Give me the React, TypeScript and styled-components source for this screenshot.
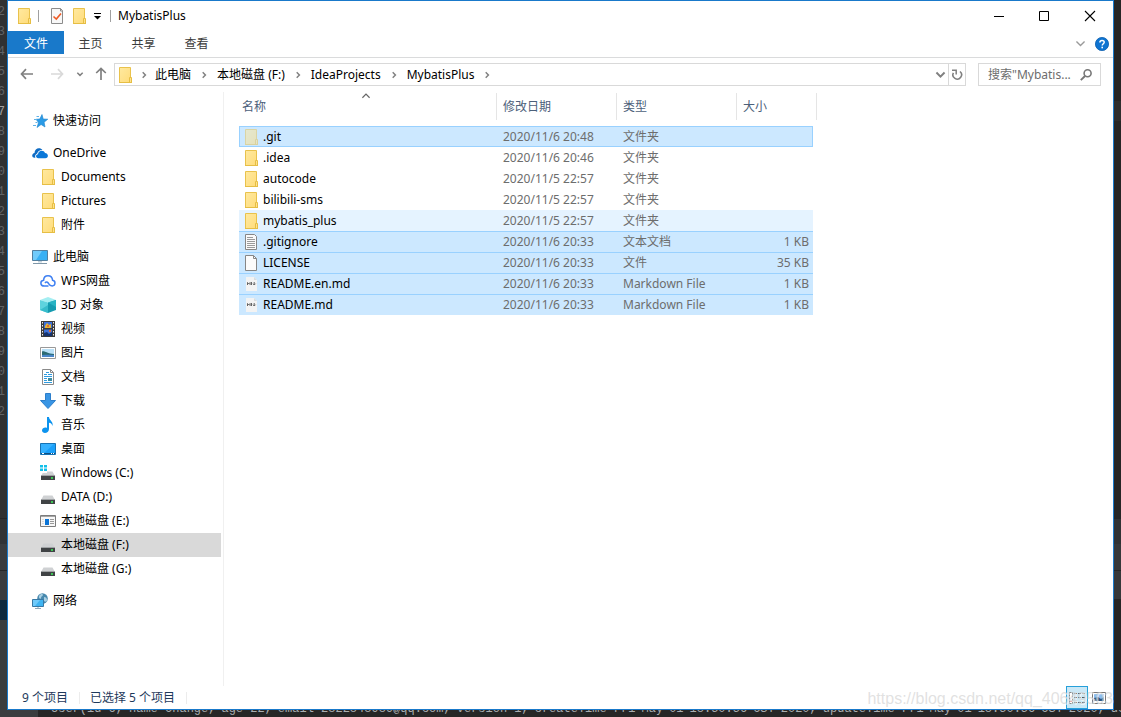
import React from "react";
import styled, { createGlobalStyle } from "styled-components";

const sans = `"Noto Sans", "Noto Sans CJK SC", sans-serif`;
const accent = "#1979ca";

const GlobalStyle = createGlobalStyle`
  * { box-sizing: border-box; }
  body { margin: 0; background: #2b2b2b; font: 12px/16px ${sans}; color: #000; }
  button, input { font: inherit; color: inherit; }
  svg { display: block; flex: none; }
`;

/* ---------- icons ---------- */

type IconProps = { faded?: boolean };

const FolderIcon = ({ faded }: IconProps) => (
  <svg width="16" height="16" viewBox="0 0 16 16" opacity={faded ? 0.5 : 1}>
    <defs>
      <linearGradient id="folderFill" x1="0" y1="0" x2="1" y2="1">
        <stop offset="0" stopColor="#ffe9a0" />
        <stop offset="1" stopColor="#ffdc7a" />
      </linearGradient>
    </defs>
    <path d="M2.500.5h11v15h-11z" fill="url(#folderFill)" stroke="#e9c24c" />
    <path d="M12.500 10.500h2v5h-2z" fill="#ffe28c" stroke="#e6be44" />
    <path d="M2 15.500h13" stroke="#e6be44" />
  </svg>
);

const CheckDocIcon = () => (
  <svg width="16" height="16" viewBox="0 0 16 16">
    <path d="M2.500.5h9l2 2v13h-11z" fill="#f8f8f8" stroke="#8c8c8c" />
    <path d="M11.500.5v2.500h2" fill="none" stroke="#8c8c8c" />
    <path d="M4.500 8.500l2.800 2.500 4.700-5.500" fill="none" stroke="#ee5a24" strokeWidth="1.600" />
  </svg>
);

const CustomizeIcon = () => (
  <svg width="8" height="8" viewBox="0 0 8 8">
    <path d="M1 1.500h7" stroke="#000" />
    <path d="M1 4h7l-3.500 3.500z" fill="#000" />
  </svg>
);

const MinimizeIcon = () => (
  <svg width="12" height="12" viewBox="0 0 12 12"><path d="M1 6.500h10" stroke="#000" /></svg>
);
const MaximizeIcon = () => (
  <svg width="12" height="12" viewBox="0 0 12 12"><path d="M1.500 1.500h9v9h-9z" fill="none" stroke="#000" /></svg>
);
const CloseIcon = () => (
  <svg width="12" height="12" viewBox="0 0 12 12"><path d="M1 1l10 10M11 1L1 11" stroke="#000" strokeWidth="1.100" /></svg>
);

const ArrowIcon = ({ turn, color }: { turn: number; color: string }) => (
  <svg width="16" height="16" viewBox="0 0 16 16">
    <path d="M14 8H3M7 3.200L2.500 8 7 12.800" transform={`rotate(${turn} 8 8)`} fill="none" stroke={color} strokeWidth="1.700" />
  </svg>
);

const ChevronIcon = ({ turn = 0, color = "#808080", size = 6, weight = 1.5 }: { turn?: number; color?: string; size?: number; weight?: number }) => (
  <svg width={size} height={size} viewBox="0 0 6 6" overflow="visible">
    <path d="M.3 1.700L3 4.400 5.700 1.700" transform={`rotate(${turn} 3 3)`} fill="none" stroke={color} strokeWidth={weight} />
  </svg>
);

const HelpIcon = () => (
  <svg width="14" height="14" viewBox="0 0 14 14">
    <circle cx="7" cy="7" r="6.600" fill="#0f74d1" stroke="#0b5fb0" strokeWidth=".8" />
    <path d="M4.900 5.400c0-2.700 4.300-2.600 4.300-.2 0 1.500-2 1.600-2 3.300" fill="none" stroke="#fff" strokeWidth="1.500" />
    <rect x="6.400" y="9.700" width="1.600" height="1.600" fill="#fff" />
  </svg>
);

const RefreshIcon = () => (
  <svg width="12" height="12" viewBox="0 0 12 12">
    <path d="M9 2.500A4.300 4.300 0 1 1 2.400 3.800" fill="none" stroke="#808080" strokeWidth="1.600" />
    <path d="M5.200 5.500V1.300H1" fill="none" stroke="#808080" strokeWidth="1.500" />
  </svg>
);

const SearchIcon = () => (
  <svg width="12" height="12" viewBox="0 0 12 12">
    <circle cx="7.600" cy="4.300" r="3.500" fill="none" stroke="#777" strokeWidth="1.600" />
    <path d="M5 7L.8 11.200" stroke="#777" strokeWidth="1.900" />
  </svg>
);

const StarIcon = () => (
  <svg width="16" height="16" viewBox="0 0 16 16">
    <path d="M10 1.500l1.200 4.500 4.600.2-3.700 3 .9 4.800-3.900-2.500L5 14.500l1.500-5L4 6.300l3.800-.3z" fill="#2b9be6" stroke="#1d83cc" strokeWidth=".6" />
    <path d="M4.500 3.500H7M2 6.500h3M3.500 9.500h2M1 12.500h3" stroke="#5fb2e8" />
  </svg>
);

const OneDriveIcon = () => (
  <svg width="16" height="16" viewBox="0 0 16 16">
    <path d="M.2 10.800c0-1.600 1-2.600 2.300-2.900C2.600 5 4.600 3.200 6.900 3.200c1.500 0 2.700.7 3.500 1.700C7.500 4.800 5.600 6.400 5.200 8.500 3.300 9 2.700 11 3.400 12.700 1.500 13 .2 12.200.2 10.800z" fill="#0f6cc4" />
    <path d="M6.300 13.200c-2.900 0-3-3.600-.3-3.900.2-4.300 6-4.800 7-1.200 3.700.1 3.900 5.100.3 5.100z" fill="#0b78d8" />
  </svg>
);

const ComputerIcon = () => (
  <svg width="16" height="16" viewBox="0 0 16 16">
    <path d="M.5 1.500h15v10H.5z" fill="#38b0f4" stroke="#527f9f" />
    <path d="M1 2h9L4 11H1z" fill="#70cbfb" />
    <path d="M6 12h4v1.500H6z" fill="#c3d2dc" />
    <path d="M1 14.500h14" stroke="#7f97a8" />
  </svg>
);

const CloudIcon = () => (
  <svg width="16" height="16" viewBox="0 0 16 16">
    <path d="M8.500 13H4.200C0 13-.2 7.800 3.600 7.300 3.800 1.200 12 1 12.600 7.300c3.400.6 3 5.500-.4 5.700-2.400 0-3-1.500-4-3C7.300 8.600 5.800 8.800 5 10" fill="none" stroke="#3f80f2" strokeWidth="1.500" />
  </svg>
);

const CubeIcon = () => (
  <svg width="16" height="16" viewBox="0 0 16 16">
    <path d="M0 3L8 0l8 3-8 2.500z" fill="#a4eef2" />
    <path d="M0 3l8 2.500V16l-8-3z" fill="#5ed3de" />
    <path d="M8 5.500L16 3v10l-8 3z" fill="#159bb0" />
    <path d="M0 13l8-5v8z" fill="#38bccb" />
    <path d="M16 3v7L8 5.500z" fill="#27b3c4" />
  </svg>
);

const VideoIcon = () => (
  <svg width="16" height="16" viewBox="0 0 16 16">
    <path d="M1 0h14v16H1z" fill="#3b3b3b" />
    <path d="M4 1h8v6H4zM4 8.500h8V15H4z" fill="#3f72d8" />
    <path d="M5 5l2-3 2 2 2-1v4H5z" fill="#e8b430" />
    <path d="M4 12l3-1 2 2 3-2v4H4z" fill="#16346f" />
    <path d="M9 9h2v2H9zM7 4h2v2H7z" fill="#df6a33" />
    <path d="M2.500 1v15M13.500 1v15" stroke="#eee" strokeDasharray="1.500 1.500" />
  </svg>
);

const PictureIcon = () => (
  <svg width="16" height="16" viewBox="0 0 16 16">
    <path d="M.5 2.500h15v11H.5z" fill="#fff" stroke="#999" />
    <path d="M2 4h12v8H2z" fill="#b9e0f7" />
    <path d="M2 6.500c3-1 5 2.500 12 2.500v1.500H2z" fill="#2b6a72" />
    <path d="M2 10c4-.5 8-.5 12 0v2H2z" fill="#4a86c8" />
  </svg>
);

const DocumentIcon = () => (
  <svg width="16" height="16" viewBox="0 0 16 16">
    <path d="M2.500.5h8l3 3v12h-11z" fill="#fff" stroke="#8a8a8a" />
    <path d="M10.500.5v3h3" fill="none" stroke="#8a8a8a" />
    <path d="M6 3.500h3M4 5.500h3M8 5.500h4M4 7.500h8M4 9.500h3M4 11.500h3M4 13.500h8" stroke="#2f9be0" />
    <path d="M8 9h4v3H8z" fill="#3f8d9f" />
  </svg>
);

const DownloadIcon = () => (
  <svg width="16" height="16" viewBox="0 0 16 16">
    <path d="M5.500.5h5v7h5L8 15.500.5 7.500h5z" fill="#3995e4" stroke="#2c7ecb" />
  </svg>
);

const MusicIcon = () => (
  <svg width="16" height="16" viewBox="0 0 16 16">
    <path d="M7 0h2c0 3.500 4.500 4 3.500 9-.5-2-1.500-3-3.500-3.300V12c0 4.800-7 5-7 1.600C2 11 5 10 7 11z" fill="#0c93ee" />
  </svg>
);

const DesktopIcon = () => (
  <svg width="16" height="16" viewBox="0 0 16 16">
    <path d="M.5 2.500h15v11H.5z" fill="#1aa0fa" stroke="#1673b5" />
    <path d="M1 3h13L4 12H1z" fill="#35b1ff" />
    <path d="M1 12.500h14" stroke="#104f80" />
    <path d="M2 12.500h2M11 12.500h1M13 12.500h1" stroke="#fff" />
  </svg>
);

const DriveIcon = ({ system }: { system?: boolean }) => (
  <svg width="16" height="16" viewBox="0 0 16 16">
    <path d="M3.500 6.500h9L15 11H1z" fill="#cfd1d3" />
    <path d="M1 11h14v4H1z" fill="#404345" />
    <path d="M1 10.500h14" stroke="#a0a3a5" />
    <path d="M11 13h2" stroke="#3cf05a" strokeWidth="1.400" />
    {system && (
      <>
        <path d="M0 0h7v8H0z" fill="#fff" />
        <path d="M0 0h3v2.500H0zM4 0h3v2.500H4zM0 3.500h3V6H0zM4 3.500h3V6H4z" fill="#12c0ea" />
      </>
    )}
  </svg>
);

const PanelDriveIcon = () => (
  <svg width="16" height="16" viewBox="0 0 16 16">
    <path d="M.5 2.500h15v11H.5z" fill="#f7f7f7" stroke="#7c7c7c" />
    <path d="M1 3.500h14" stroke="#a5a5a5" />
    <path d="M5 6h4v6H5z" fill="#0b74d6" />
    <path d="M10 6.500h4M10 8.500h4M10 10.500h4" stroke="#999" />
    <path d="M2 6.500h2M2 8.500h2M2 10.500h2" stroke="#ddd" />
  </svg>
);

const NetworkIcon = () => (
  <svg width="16" height="16" viewBox="0 0 16 16">
    <circle cx="10.500" cy="5.500" r="5.300" fill="#4889ae" />
    <path d="M7 3c2-3 4-2 4-1S9 3 9 5 6 5 7 3zM12 4c2 0 3 1 3 3s-2 2-3 1z" fill="#a9cfe2" />
    <path d="M.5 6.500h11v7H.5z" fill="#3fb4f2" stroke="#3879a5" />
    <path d="M1 7h7l-5 6H1z" fill="#6fcafa" />
    <path d="M3 15.500h6M6 14v1" stroke="#8fa8b8" />
  </svg>
);

const TextFileIcon = () => (
  <svg width="16" height="16" viewBox="0 0 16 16">
    <path d="M2.500.5h9l2 2v13h-11z" fill="#fafafa" stroke="#868686" />
    <path d="M4 3.500h6M4 5.500h8M4 7.500h8M4 9.500h8M4 11.500h8M4 13.500h8" stroke="#9a9a9a" />
  </svg>
);

const BlankFileIcon = () => (
  <svg width="16" height="16" viewBox="0 0 16 16">
    <path d="M2.500.5h8l3 3v12h-11z" fill="#fbfbfb" stroke="#868686" />
    <path d="M10.500.5v3h3" fill="none" stroke="#868686" />
  </svg>
);

const MarkdownIcon = () => (
  <svg width="16" height="16" viewBox="0 0 16 16">
    <path d="M3 1h8l3 3v11H3z" fill="#f3f3f3" />
    <path d="M11 1v3h3z" fill="#d8dde0" />
    <path d="M4.500 9V6.500l1.300 1.300 1.300-1.300V9M8.500 6v3M10 7.700l1.200 1.300 1.300-1.300M11.200 6v2.500" fill="none" stroke="#555" strokeWidth=".9" />
  </svg>
);

const DetailsViewIcon = () => (
  <svg width="16" height="14" viewBox="0 0 16 14">
    <path d="M.5 1.500h3v11h-3z" fill="#fff" stroke="#888" strokeDasharray="2 1" />
    <path d="M1 10.500h2" stroke="#d03030" />
    <path d="M5 2.500h11M5 6.500h11M5 11.500h11" stroke="#555" strokeDasharray="3 1" />
  </svg>
);

const ThumbViewIcon = () => (
  <svg width="14" height="12" viewBox="0 0 14 12">
    <path d="M.5.5h13v11H.5z" fill="#fff" stroke="#777" />
    <path d="M2 2h10v7H2z" fill="#8dbdf0" />
    <path d="M2 6l4-1 3 2 3-2v4H2z" fill="#2c557e" />
  </svg>
);

/* ---------- desktop behind the window ---------- */

const Desktop = styled.div`
  min-height: 100vh;
  display: grid;
  grid-template-columns: 7px minmax(0, 1fr) 7px;
  grid-template-rows: minmax(0, 1fr) 7px;
`;

const Strip = styled.div`
  display: flex;
  flex-direction: column;
  overflow: hidden;
  background: #262626;
`;

const Band = styled.div<{ $h?: number; $color: string; $line?: boolean }>`
  flex: ${(p) => (p.$h ? `0 0 ${p.$h}px` : "1 0 0")};
  background: ${(p) => p.$color};
  border-top: ${(p) => (p.$line ? "1px solid #252627" : "0")};
`;

const LineNumbers = styled.ol`
  flex: 0 0 518px;
  margin: 0;
  padding: 2px 2px 0 0;
  list-style: none;
  background: #303132;
  font: 12px/20px "Liberation Mono", monospace;
  color: #606366;
`;

const LineNumber = styled.li<{ $current: boolean }>`
  display: flex;
  justify-content: flex-end;
  color: ${(p) => (p.$current ? "#a4a3a3" : "inherit")};
`;

const Console = styled.div`
  grid-column: 1 / -1;
  display: flex;
  align-items: flex-end;
  gap: 6px;
  overflow: hidden;
  padding-left: 51px;
  background: linear-gradient(90deg, #3a3d3f 38px, #262626 38px);
  font: 12px/16px "Liberation Mono", monospace;
  color: #a9adb0;
  white-space: nowrap;
`;

/* ---------- window frame ---------- */

const Window = styled.main`
  display: flex;
  flex-direction: column;
  background: #fff;
  border: 1px solid ${accent};
`;

const TitleBar = styled.header`
  display: flex;
  align-items: center;
  height: 30px;
  padding-left: 8px;
`;

const IconButton = styled.button<{ $w: number; $h?: number }>`
  display: flex;
  align-items: center;
  justify-content: center;
  flex: none;
  width: ${(p) => p.$w}px;
  height: ${(p) => p.$h ?? 22}px;
  padding: 0;
  border: 0;
  background: none;
`;

const TitleRule = styled.span`
  width: 1px;
  height: 12px;
  margin: 0 7px 0 6px;
  background: #a0a0a0;
`;

const Title = styled.h1`
  flex: 1;
  margin: 0;
  font-size: 12px;
  font-weight: 400;
`;

const TabBar = styled.nav`
  display: flex;
  height: 27px;
  padding-bottom: 3px;
  border-bottom: 1px solid #dadbdc;
`;

const Tab = styled.button<{ $primary?: boolean }>`
  width: ${(p) => (p.$primary ? 56 : 53)}px;
  padding: 2px 0 0;
  border: 0;
  background: ${(p) => (p.$primary ? accent : "none")};
  color: ${(p) => (p.$primary ? "#fff" : "#3b3b3b")};
`;

const TabTools = styled.div`
  display: flex;
  align-items: center;
  margin-left: auto;
  padding: 2px 0 0;
`;

const NavBar = styled.div`
  display: flex;
  height: 34px;
  padding: 5px 12px 6px 4px;
`;

const AddressBar = styled.div`
  flex: 1;
  display: flex;
  align-items: center;
  padding-left: 2px;
  border: 1px solid #d9d9d9;
`;

const Crumbs = styled.ol`
  flex: 1;
  display: flex;
  margin: 0;
  padding: 0;
  list-style: none;
`;

const Crumb = styled.li`
  display: flex;
  align-items: center;
`;

const CrumbLink = styled.a`
  color: #000;
  text-decoration: none;
  white-space: nowrap;
`;

const CrumbArrow = styled.span<{ $first?: boolean }>`
  display: flex;
  justify-content: center;
  width: ${(p) => (p.$first ? 22 : 26)}px;
`;

const RefreshCell = styled.div`
  border-left: 1px solid #d9d9d9;
`;

const SearchBox = styled.label`
  display: flex;
  align-items: center;
  width: 123px;
  margin-left: 12px;
  padding: 0 8px 0 9px;
  border: 1px solid #d9d9d9;
`;

const SearchInput = styled.input`
  flex: 1;
  min-width: 0;
  height: 18px;
  padding: 0;
  border: 0;
  outline: 0;
  background: none;
  &::placeholder { color: #6d6d6d; opacity: 1; }
`;

/* ---------- body ---------- */

const Body = styled.div`
  flex: 1;
  display: flex;
`;

const Sidebar = styled.nav`
  flex: none;
  width: 216px;
  padding: 17px 2px 0 0;
  border-right: 1px solid #f0f0f0;
`;

const TreeGroup = styled.ul`
  margin: 0 0 8px;
  padding: 0;
  list-style: none;
`;

const TreeItem = styled.button<{ $nested: boolean; $selected?: boolean }>`
  display: flex;
  align-items: center;
  gap: 5px;
  width: 100%;
  height: 24px;
  padding: 0 0 0 ${(p) => (p.$nested ? 32 : 24)}px;
  border: 0;
  background: ${(p) => (p.$selected ? "#d9d9d9" : "none")};
  text-align: left;
`;

const Content = styled.section`
  flex: 1;
  padding-left: 15px;
`;

const FileTable = styled.table`
  width: 578px;
  table-layout: fixed;
  border-spacing: 0;
`;

const Head = styled.th`
  position: relative;
  padding: 1px 0 6px;
  font-weight: 400;
  color: #4c607a;
`;

const HeadLabel = styled.div<{ $first: boolean }>`
  display: flex;
  align-items: center;
  height: 27px;
  padding-left: ${(p) => (p.$first ? 3 : 6)}px;
  border-right: 1px solid #e5e5e5;
`;

const SortMark = styled.span`
  position: absolute;
  inset: 0 4px auto 0;
  display: flex;
  justify-content: center;
`;

type RowState = "none" | "focused" | "hover" | "selected";

const rowColors: Record<RowState, string> = {
  none: "transparent",
  focused: "#cce8ff",
  hover: "#e5f3ff",
  selected: "#cce8ff",
};

const rowEdges: Record<RowState, string> = {
  none: "none",
  hover: "none",
  focused: "inset 0 1px #99d1ff, inset 0 -1px #99d1ff",
  selected: "inset 0 1px #99d1ff",
};

const FileRow = styled.tr<{ $state: RowState }>`
  position: relative;
  height: 21px;
  background: linear-gradient(${(p) => rowColors[p.$state]}, ${(p) => rowColors[p.$state]}) 0 0 / 574px 100% no-repeat;
  td { box-shadow: ${(p) => rowEdges[p.$state]}; }
  ${(p) =>
    p.$state === "focused" &&
    `td:first-child { box-shadow: inset 1px 1px #99d1ff, inset 0 -1px #99d1ff; }
     td:last-child { box-shadow: inset -1px 1px #99d1ff, inset 0 -1px #99d1ff; }`}
`;

const Cell = styled.td<{ $right?: boolean }>`
  padding: 0 ${(p) => (p.$right ? 4 : 0)}px 0 ${(p) => (p.$right ? 0 : 6)}px;
  color: #6d6d6d;
  text-align: ${(p) => (p.$right ? "right" : "left")};
  white-space: nowrap;
`;

const NameCell = styled(Cell)`
  padding: 0 0 0 4px;
  color: #000;
`;

const FileName = styled.div`
  display: flex;
  align-items: center;
  gap: 4px;
`;

/* ---------- status bar ---------- */

const StatusBar = styled.footer`
  position: relative;
  display: flex;
  align-items: center;
  height: 23px;
  padding: 0 3px 0 14px;
  color: #1e395b;
`;

const StatusText = styled.span`
  margin-right: 10px;
  padding-right: 11px;
  line-height: 12px;
  border-right: 1px solid #ececec;
`;

const ViewButtons = styled.div`
  display: flex;
  align-items: center;
  margin-left: auto;
`;

const ViewButton = styled.button<{ $active?: boolean }>`
  display: flex;
  align-items: center;
  justify-content: center;
  width: 22px;
  height: 23px;
  padding: 0;
  border: 1px solid ${(p) => (p.$active ? "#26a0da" : "transparent")};
  background: ${(p) => (p.$active ? "#cbe8f6" : "none")};
`;

const Watermark = styled.span`
  position: absolute;
  right: 0;
  bottom: 0;
  font: 16px/20px "Liberation Sans", sans-serif;
  color: rgba(205, 205, 205, 0.6);
  text-shadow: 1px 1px 0 rgba(255, 255, 255, 0.6);
  pointer-events: none;
`;

/* ---------- data ---------- */

type TreeEntry = { label: string; icon: React.ReactNode; selected?: boolean };

const tree: TreeEntry[][] = [
  [{ label: "快速访问", icon: <StarIcon /> }],
  [
    { label: "OneDrive", icon: <OneDriveIcon /> },
    { label: "Documents", icon: <FolderIcon /> },
    { label: "Pictures", icon: <FolderIcon /> },
    { label: "附件", icon: <FolderIcon /> },
  ],
  [
    { label: "此电脑", icon: <ComputerIcon /> },
    { label: "WPS网盘", icon: <CloudIcon /> },
    { label: "3D 对象", icon: <CubeIcon /> },
    { label: "视频", icon: <VideoIcon /> },
    { label: "图片", icon: <PictureIcon /> },
    { label: "文档", icon: <DocumentIcon /> },
    { label: "下载", icon: <DownloadIcon /> },
    { label: "音乐", icon: <MusicIcon /> },
    { label: "桌面", icon: <DesktopIcon /> },
    { label: "Windows (C:)", icon: <DriveIcon system /> },
    { label: "DATA (D:)", icon: <DriveIcon /> },
    { label: "本地磁盘 (E:)", icon: <PanelDriveIcon /> },
    { label: "本地磁盘 (F:)", icon: <DriveIcon />, selected: true },
    { label: "本地磁盘 (G:)", icon: <DriveIcon /> },
  ],
  [{ label: "网络", icon: <NetworkIcon /> }],
];

type FileEntry = { name: string; date: string; type: string; size?: string; icon: React.ReactNode; state?: RowState };

const files: FileEntry[] = [
  { name: ".git", date: "2020/11/6 20:48", type: "文件夹", icon: <FolderIcon faded />, state: "focused" },
  { name: ".idea", date: "2020/11/6 20:46", type: "文件夹", icon: <FolderIcon /> },
  { name: "autocode", date: "2020/11/5 22:57", type: "文件夹", icon: <FolderIcon /> },
  { name: "bilibili-sms", date: "2020/11/5 22:57", type: "文件夹", icon: <FolderIcon /> },
  { name: "mybatis_plus", date: "2020/11/5 22:57", type: "文件夹", icon: <FolderIcon />, state: "hover" },
  { name: ".gitignore", date: "2020/11/6 20:33", type: "文本文档", size: "1 KB", icon: <TextFileIcon />, state: "selected" },
  { name: "LICENSE", date: "2020/11/6 20:33", type: "文件", size: "35 KB", icon: <BlankFileIcon />, state: "selected" },
  { name: "README.en.md", date: "2020/11/6 20:33", type: "Markdown File", size: "1 KB", icon: <MarkdownIcon />, state: "selected" },
  { name: "README.md", date: "2020/11/6 20:33", type: "Markdown File", size: "1 KB", icon: <MarkdownIcon />, state: "selected" },
];

const columns = ["名称", "修改日期", "类型", "大小"];
const crumbs = ["此电脑", "本地磁盘 (F:)", "IdeaProjects", "MybatisPlus"];
const lineNumbers = Array.from({ length: 21 }, (_, i) => i + 2);
const logLine =
  "User(id=6, name=Change, age=22, email=2822848989@qq.com, version=1, createTime=Fri May 01 18:50:56 CST 2020, updateTime=Fri May 01 18:50:56 CST 2020, del";

export default function App() {
  return (
    <>
      <GlobalStyle />
      <Desktop>
        <Strip>
          <LineNumbers>
            {lineNumbers.map((n) => (
              <LineNumber key={n} $current={n === 7}>{n % 10}</LineNumber>
            ))}
          </LineNumbers>
          <Band $h={26} $color="#313335" $line />
          <Band $h={26} $color="#3a3c3e" />
          <Band $h={30} $color="#3a3c3e" $line />
          <Band $h={20} $color="#0d293e" />
          <Band $color="#3a3d3f" />
        </Strip>

        <Window>
          <TitleBar>
            <FolderIcon />
            <TitleRule />
            <IconButton $w={22} aria-label="属性"><CheckDocIcon /></IconButton>
            <IconButton $w={22} aria-label="新建文件夹"><FolderIcon /></IconButton>
            <IconButton $w={14} aria-label="自定义快速访问工具栏"><CustomizeIcon /></IconButton>
            <TitleRule />
            <Title>MybatisPlus</Title>
            <IconButton $w={45} $h={30} aria-label="最小化"><MinimizeIcon /></IconButton>
            <IconButton $w={46} $h={30} aria-label="最大化"><MaximizeIcon /></IconButton>
            <IconButton $w={46} $h={30} aria-label="关闭"><CloseIcon /></IconButton>
          </TitleBar>

          <TabBar>
            <Tab $primary>文件</Tab>
            <Tab>主页</Tab>
            <Tab>共享</Tab>
            <Tab>查看</Tab>
            <TabTools>
              <IconButton $w={22} aria-label="展开功能区"><ChevronIcon size={9} color="#9a9a9a" weight={0.9} /></IconButton>
              <IconButton $w={22} aria-label="帮助"><HelpIcon /></IconButton>
            </TabTools>
          </TabBar>

          <NavBar>
            <IconButton $w={30} aria-label="后退"><ArrowIcon turn={0} color="#808080" /></IconButton>
            <IconButton $w={30} aria-label="前进"><ArrowIcon turn={180} color="#d9d9d9" /></IconButton>
            <IconButton $w={16} aria-label="最近浏览的位置"><ChevronIcon /></IconButton>
            <IconButton $w={26} aria-label="上移"><ArrowIcon turn={90} color="#808080" /></IconButton>
            <AddressBar>
              <FolderIcon />
              <Crumbs>
                <Crumb><CrumbArrow $first><ChevronIcon turn={-90} /></CrumbArrow></Crumb>
                {crumbs.map((c) => (
                  <Crumb key={c}>
                    <CrumbLink href="#">{c}</CrumbLink>
                    <CrumbArrow><ChevronIcon turn={-90} /></CrumbArrow>
                  </Crumb>
                ))}
              </Crumbs>
              <IconButton $w={16} $h={21} aria-label="历史记录"><ChevronIcon size={9} weight={1.3} /></IconButton>
              <RefreshCell>
                <IconButton $w={16} $h={21} aria-label="刷新"><RefreshIcon /></IconButton>
              </RefreshCell>
            </AddressBar>
            <SearchBox>
              <SearchInput aria-label="搜索" placeholder={'搜索"Mybatis...'} />
              <SearchIcon />
            </SearchBox>
          </NavBar>

          <Body>
            <Sidebar>
              {tree.map((group) => (
                <TreeGroup key={group[0].label}>
                  {group.map((item, i) => (
                    <li key={item.label}>
                      <TreeItem $nested={i > 0} $selected={item.selected}>
                        {item.icon}
                        {item.label}
                      </TreeItem>
                    </li>
                  ))}
                </TreeGroup>
              ))}
            </Sidebar>

            <Content>
              <FileTable>
                <colgroup>
                  <col width="258" />
                  <col width="120" />
                  <col width="120" />
                  <col width="76" />
                  <col width="4" />
                </colgroup>
                <thead>
                  <tr>
                    {columns.map((c, i) => (
                      <Head key={c} colSpan={i === 3 ? 2 : 1}>
                        <HeadLabel $first={i === 0}>{c}</HeadLabel>
                        {i === 0 && <SortMark><ChevronIcon turn={180} size={8} color="#666" weight={0.9} /></SortMark>}
                      </Head>
                    ))}
                  </tr>
                </thead>
                <tbody>
                  {files.map((f) => (
                    <FileRow key={f.name} $state={f.state ?? "none"}>
                      <NameCell>
                        <FileName>{f.icon}{f.name}</FileName>
                      </NameCell>
                      <Cell>{f.date}</Cell>
                      <Cell>{f.type}</Cell>
                      <Cell $right>{f.size}</Cell>
                    </FileRow>
                  ))}
                </tbody>
              </FileTable>
            </Content>
          </Body>

          <StatusBar>
            <StatusText>9 个项目</StatusText>
            <StatusText>已选择 5 个项目</StatusText>
            <ViewButtons>
              <ViewButton $active aria-label="详细信息"><DetailsViewIcon /></ViewButton>
              <ViewButton aria-label="大缩略图"><ThumbViewIcon /></ViewButton>
            </ViewButtons>
            <Watermark>https://blog.csdn.net/qq_40649503</Watermark>
          </StatusBar>
        </Window>

        <Strip>
          <Band $h={101} $color="#262626" />
          <Band $h={20} $color="#2e2e2e" />
          <Band $h={397} $color="#262626" />
          <Band $h={26} $color="#303234" $line />
          <Band $h={26} $color="#36383a" />
          <Band $h={29} $color="#36383a" $line />
          <Band $color="#262626" />
        </Strip>

        <Console>
          {logLine.split(" ").map((word, i) => (
            <span key={i}>{word}</span>
          ))}
        </Console>
      </Desktop>
    </>
  );
}
